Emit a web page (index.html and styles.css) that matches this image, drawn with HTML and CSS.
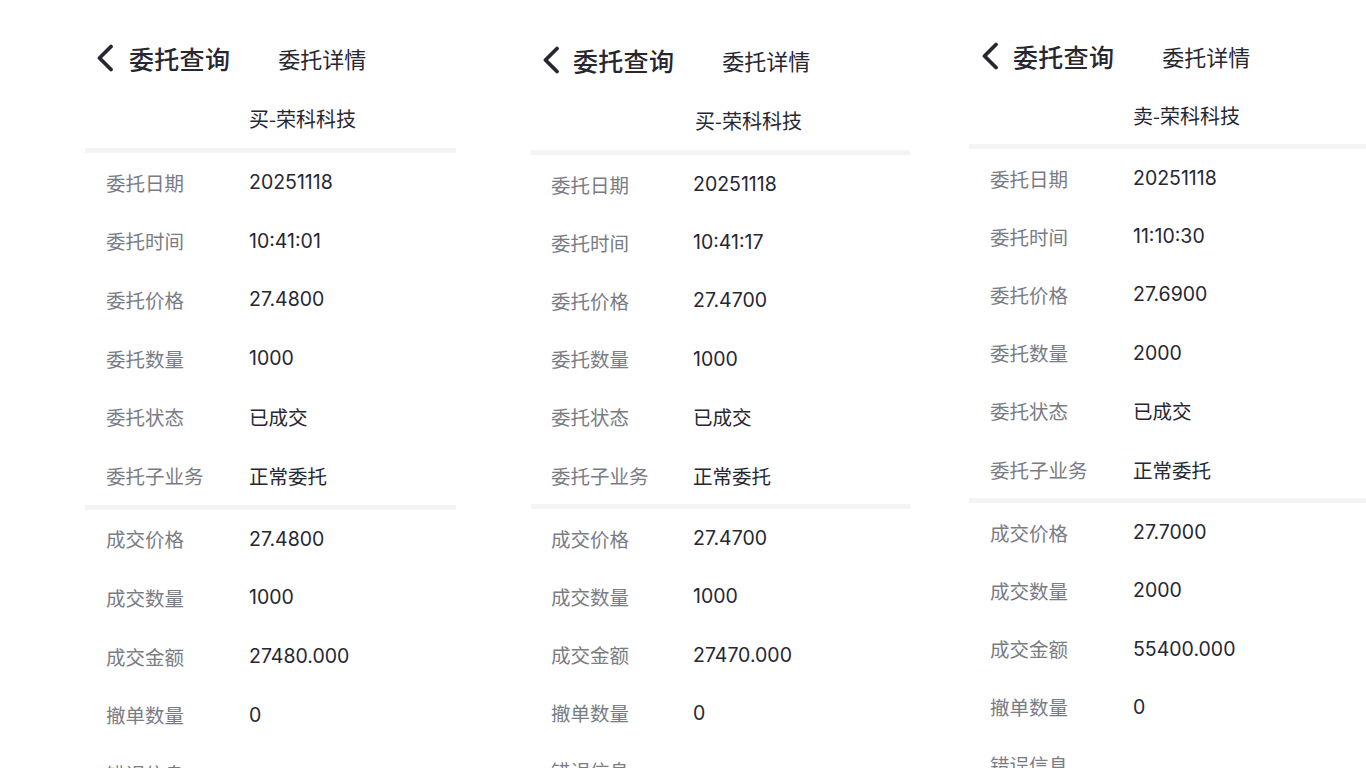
FILE: index.html
```html
<!DOCTYPE html>
<html lang="zh-CN">
<head>
<meta charset="utf-8">
<title>委托详情</title>
<link rel="stylesheet" href="styles.css">
</head>
<body>
<div class="screens">
  <section class="panel p1">
    <header class="nav">
      <svg class="back" viewBox="0 0 18 28" width="18" height="28"><path d="M15 2.5 L3.5 14 L15 25.5" fill="none" stroke="#262731" stroke-width="3.8" stroke-linecap="round" stroke-linejoin="round"/></svg>
      <span class="nav-title">委托查询</span>
      <span class="nav-sub">委托详情</span>
    </header>
    <div class="stock">买-荣科科技</div>
    <div class="sep"></div>
    <div class="row"><span class="k">委托日期</span><span class="v">20251118</span></div>
    <div class="row"><span class="k">委托时间</span><span class="v">10:41:01</span></div>
    <div class="row"><span class="k">委托价格</span><span class="v">27.4800</span></div>
    <div class="row"><span class="k">委托数量</span><span class="v">1000</span></div>
    <div class="row"><span class="k">委托状态</span><span class="v">已成交</span></div>
    <div class="row"><span class="k">委托子业务</span><span class="v">正常委托</span></div>
    <div class="sep"></div>
    <div class="row"><span class="k">成交价格</span><span class="v">27.4800</span></div>
    <div class="row"><span class="k">成交数量</span><span class="v">1000</span></div>
    <div class="row"><span class="k">成交金额</span><span class="v">27480.000</span></div>
    <div class="row"><span class="k">撤单数量</span><span class="v">0</span></div>
    <div class="row"><span class="k">错误信息</span><span class="v"></span></div>
  </section>

  <section class="panel p2">
    <header class="nav">
      <svg class="back" viewBox="0 0 18 28" width="18" height="28"><path d="M15 2.5 L3.5 14 L15 25.5" fill="none" stroke="#262731" stroke-width="3.8" stroke-linecap="round" stroke-linejoin="round"/></svg>
      <span class="nav-title">委托查询</span>
      <span class="nav-sub">委托详情</span>
    </header>
    <div class="stock">买-荣科科技</div>
    <div class="sep"></div>
    <div class="row"><span class="k">委托日期</span><span class="v">20251118</span></div>
    <div class="row"><span class="k">委托时间</span><span class="v">10:41:17</span></div>
    <div class="row"><span class="k">委托价格</span><span class="v">27.4700</span></div>
    <div class="row"><span class="k">委托数量</span><span class="v">1000</span></div>
    <div class="row"><span class="k">委托状态</span><span class="v">已成交</span></div>
    <div class="row"><span class="k">委托子业务</span><span class="v">正常委托</span></div>
    <div class="sep"></div>
    <div class="row"><span class="k">成交价格</span><span class="v">27.4700</span></div>
    <div class="row"><span class="k">成交数量</span><span class="v">1000</span></div>
    <div class="row"><span class="k">成交金额</span><span class="v">27470.000</span></div>
    <div class="row"><span class="k">撤单数量</span><span class="v">0</span></div>
    <div class="row"><span class="k">错误信息</span><span class="v"></span></div>
  </section>

  <section class="panel p3">
    <header class="nav">
      <svg class="back" viewBox="0 0 18 28" width="18" height="28"><path d="M15 2.5 L3.5 14 L15 25.5" fill="none" stroke="#262731" stroke-width="3.8" stroke-linecap="round" stroke-linejoin="round"/></svg>
      <span class="nav-title">委托查询</span>
      <span class="nav-sub">委托详情</span>
    </header>
    <div class="stock">卖-荣科科技</div>
    <div class="sep"></div>
    <div class="row"><span class="k">委托日期</span><span class="v">20251118</span></div>
    <div class="row"><span class="k">委托时间</span><span class="v">11:10:30</span></div>
    <div class="row"><span class="k">委托价格</span><span class="v">27.6900</span></div>
    <div class="row"><span class="k">委托数量</span><span class="v">2000</span></div>
    <div class="row"><span class="k">委托状态</span><span class="v">已成交</span></div>
    <div class="row"><span class="k">委托子业务</span><span class="v">正常委托</span></div>
    <div class="sep"></div>
    <div class="row"><span class="k">成交价格</span><span class="v">27.7000</span></div>
    <div class="row"><span class="k">成交数量</span><span class="v">2000</span></div>
    <div class="row"><span class="k">成交金额</span><span class="v">55400.000</span></div>
    <div class="row"><span class="k">撤单数量</span><span class="v">0</span></div>
    <div class="row"><span class="k">错误信息</span><span class="v"></span></div>
  </section>
</div>
</body>
</html>
```

FILE: styles.css
```css
html, body {
  margin: 0;
  padding: 0;
  background: #ffffff;
  height: 100%;
  overflow: hidden;
}

body {
  font-family: Inter, "Noto Sans CJK SC", sans-serif;
  color: #262731;
}

.screens {
  display: flex;
  align-items: flex-start;
  height: 768px;
  overflow: hidden;
}

.panel {
  display: flex;
  flex-direction: column;
  flex-shrink: 0;
}

.p1 {
  width: 371px;
  margin-left: 85px;
  padding-top: 28px;
  --row: 58.6px;
}

.p2 {
  width: 379px;
  margin-left: 75px;
  padding-top: 30px;
  --row: 58.2px;
}

.p2 .nav {
  padding-left: 11px;
}

.p2 .nav-title {
  margin-left: 13px;
}

.p2 .k {
  padding-left: 20px;
  width: 142px;
}

.p3 {
  width: 397px;
  margin-left: 59px;
  padding-top: 26px;
  --row: 58.2px;
}

.p3 .nav {
  padding-left: 12px;
}

.p3 .nav-title {
  margin-left: 14px;
}

.p3 .stock {
  height: 58px;
}

.nav {
  height: 60px;
  display: flex;
  align-items: center;
  padding-left: 11px;
}

.back {
  display: block;
  flex-shrink: 0;
}

.nav-title {
  margin-left: 15px;
  font-size: 25px;
  font-weight: 500;
  color: #262731;
  font-family: "Noto Sans CJK SC", sans-serif;
  letter-spacing: 0.3px;
}

.nav-sub {
  margin-left: 48px;
  font-size: 22px;
  color: #262731;
  font-family: "Noto Sans CJK SC", sans-serif;
}

.stock {
  height: 60px;
  display: flex;
  align-items: center;
  padding-left: 164px;
  font-size: 20px;
  color: #262731;
  font-family: "Noto Sans CJK SC", sans-serif;
}

.sep {
  height: 5px;
  background: #f4f4f6;
}

.row {
  height: var(--row);
  display: flex;
  align-items: center;
  font-size: 19.5px;
}

.k {
  width: 143px;
  padding-left: 21px;
  color: #7a7c84;
  font-family: "Noto Sans CJK SC", sans-serif;
  flex-shrink: 0;
}

.v {
  color: #262731;
}
```
